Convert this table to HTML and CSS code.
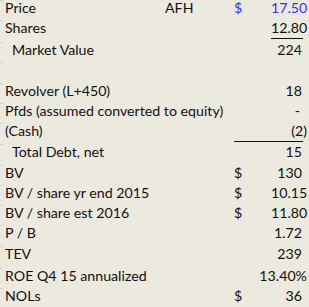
FILE: index.html
```html
<!DOCTYPE html>
<html>
<head>
<meta charset="utf-8">
<link rel="stylesheet" href="styles.css">
</head>
<body>
<div class="sheet">
  <div class="row h20"><div class="stub"></div><div class="lbl">Price</div><div class="afh">AFH</div><div class="dol blue">$</div><div class="val blue">17.50</div></div>
  <div class="row h22"><div class="stub"></div><div class="lbl">Shares</div><div class="val">12.80</div><div class="uline u-val"></div></div>
  <div class="row h20"><div class="stub"></div><div class="lbl ind">Market Value</div><div class="val">224</div></div>
  <div class="row h21"><div class="stub"></div></div>
  <div class="row h20"><div class="stub"></div><div class="lbl">Revolver (L+450)</div><div class="val">18</div></div>
  <div class="row h20"><div class="stub"></div><div class="lbl">Pfds (assumed converted to equity)</div><div class="val dash">-</div></div>
  <div class="row h21"><div class="stub"></div><div class="lbl">(Cash)</div><div class="val wide">(2)</div><div class="uline u-wide"></div></div>
  <div class="row h21"><div class="stub"></div><div class="lbl ind">Total Debt, net</div><div class="val">15</div></div>
  <div class="row h20"><div class="stub"></div><div class="lbl">BV</div><div class="dol">$</div><div class="val">130</div></div>
  <div class="row h20"><div class="stub"></div><div class="lbl">BV / share yr end 2015</div><div class="dol">$</div><div class="val">10.15</div></div>
  <div class="row h20"><div class="stub"></div><div class="lbl">BV / share est 2016</div><div class="dol">$</div><div class="val">11.80</div></div>
  <div class="row h21"><div class="stub"></div><div class="lbl">P / B</div><div class="val">1.72</div></div>
  <div class="row h22"><div class="stub"></div><div class="lbl">TEV</div><div class="val">239</div></div>
  <div class="row h20"><div class="stub"></div><div class="lbl">ROE Q4 15 annualized</div><div class="val wide">13.40%</div></div>
  <div class="row h20"><div class="stub"></div><div class="lbl">NOLs</div><div class="dol">$</div><div class="val">36</div></div>
</div>
</body>
</html>
```

FILE: styles.css
```css
html, body {
  margin: 0;
  padding: 0;
  background: #ece9df;
}
body {
  font-family: Lato, "Liberation Sans", sans-serif;
  font-size: 14.2px;
  color: #111;
  overflow: hidden;
}
.sheet {
  width: 309px;
}
.row {
  display: grid;
  grid-template-columns: 3px 159px 72px 37px 32px 6px;
  grid-template-rows: 100%;
  line-height: 16px;
  white-space: nowrap;
}
.h20 { height: 20px; }
.h21 { height: 21px; }
.h22 { height: 22px; }
.row > div {
  grid-row: 1;
  padding-top: 0;
}
.stub {
  grid-column: 1;
  border-top: 1px solid #d2d0c8;
}
.lbl {
  grid-column: 2 / 5;
  padding-left: 2px;
}
.lbl.ind { padding-left: 9px; }
.afh {
  grid-column: 3;
  padding-left: 3px;
}
.dol {
  grid-column: 4;
  padding-left: 0;
}
.val {
  grid-column: 5 / 7;
  text-align: right;
  padding-right: 7px;
}
.val.wide { padding-right: 2px; grid-column: 4 / 7; }
.val.dash { padding-right: 9px; }
.blue { color: #3333ff; }
.row > .uline {
  padding: 0;
  height: 19px;
  border-bottom: 1px solid #111;
  align-self: start;
  box-sizing: border-box;
}
.u-val { grid-column: 5; }
.u-wide { grid-column: 4 / 6; }
```
